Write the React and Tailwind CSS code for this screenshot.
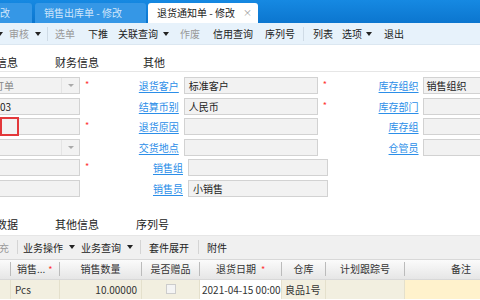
import React from "react";

const font = { fontFamily: '"Noto Sans CJK SC", "Noto Sans", sans-serif' };

const Caret = ({ className = "" }) => (
  <span className={"inline-block w-0 h-0 border-l-[3px] border-r-[3px] border-t-[4px] border-l-transparent border-r-transparent border-t-[#222] " + className}></span>
);

const Sep = ({ className = "", color = "bg-[#cfdbe6]" }) => (
  <span className={"w-px h-[14px] " + color + " " + className}></span>
);

const Star = () => <span className="text-[#f33] text-[9px] leading-none -mt-[2px]">*</span>;

const Box = ({ value = "", dropdown = false, muted = false, className = "", pad = "pl-[4px]" }) => (
  <div className={"h-[17px] bg-[#f2f2f2] border border-[#d2d2d2] flex items-center text-[10px] " + className}>
    <span className={"flex-1 whitespace-nowrap overflow-hidden " + pad + " " + (muted ? "text-[#888]" : "text-[#222]")}>{value}</span>
    {dropdown && (
      <span className="w-[18px] h-full border-l border-[#e4e4e4] flex items-center justify-center">
        <span className="inline-block w-0 h-0 border-l-[3px] border-r-[3px] border-t-[3px] border-l-transparent border-r-transparent border-t-[#aaa]"></span>
      </span>
    )}
  </div>
);

const Label = ({ children }) => (
  <span className="text-[10px] text-[#2b8ee8] underline underline-offset-2 whitespace-nowrap">{children}</span>
);

const rows = [
  { c1: "订单", pad: "pl-[34px]", d1: true, s1: true, l2: "退货客户", v2: "标准客户", s2: true, l3: "库存组织", v3: "销售组织" },
  { c1: "03", pad: "pl-[40px]", l2: "结算币别", v2: "人民币", s2: true, l3: "库存部门" },
  { red: true, s1: true, l2: "退货原因", l3: "库存组" },
  { d1: true, l2: "交货地点", l3: "仓管员" },
  { s1: true, l2: "销售组" },
  { l2: "销售员", v2: "小销售" },
];

export default function App() {
  return (
    <div className="w-[480px] h-[300px] bg-white overflow-hidden relative text-[10px]" style={font}>
      {/* tab bar */}
      <div className="h-[23px] bg-gradient-to-b from-[#1689e2] to-[#0b76cf] flex items-end whitespace-nowrap">
        <div className="w-[32px] h-[20px] bg-[#3597e6] rounded-tr-[3px] text-[#cfe6fb] leading-[20px] pl-0">改</div>
        <div className="ml-[3px] w-[111px] h-[20px] bg-[#3597e6] rounded-t-[3px] text-[#cfe6fb] leading-[20px] pl-[9px]">销售出库单 - 修改</div>
        <div className="ml-[2px] w-[110px] h-[20px] bg-white rounded-t-[3px] text-[#222] leading-[20px] pl-[9px] flex">
          <span className="flex-1">退货通知单 - 修改</span>
          <span className="text-[#999] text-[9px] pr-[6px]">×</span>
        </div>
      </div>
      {/* toolbar */}
      <div className="h-[22px] bg-[#e7f2fb] border-b border-[#dbe7f1] flex items-center text-[#222] whitespace-nowrap">
        <Caret className="-ml-[3px]" />
        <span className="ml-[6px] text-[#999]">审核</span>
        <Caret className="ml-[6px]" />
        <Sep className="ml-[6px]" />
        <span className="ml-[7px] text-[#999]">选单</span>
        <span className="ml-[13px]">下推</span>
        <span className="ml-[10px]">关联查询</span>
        <Caret className="ml-[5px]" />
        <span className="ml-[11px] text-[#999]">作废</span>
        <span className="ml-[13px]">信用查询</span>
        <span className="ml-[12px]">序列号</span>
        <Sep className="ml-[8px]" />
        <span className="ml-[9px]">列表</span>
        <span className="ml-[9px]">选项</span>
        <Caret className="ml-[4px]" />
        <span className="ml-[12px]">退出</span>
      </div>
      {/* section tabs */}
      <div className="mt-[5px] h-[22px] pt-[3px] border-b border-[#e6e6e6] flex items-center text-[11px] text-[#222] whitespace-nowrap">
        <span className="-ml-[4px]">信息</span>
        <span className="ml-[37px]">财务信息</span>
        <span className="ml-[44px]">其他</span>
      </div>
      {/* form */}
      <div className="mt-[5px] flex flex-col">
        {rows.map((r, i) => (
          <div key={i} className="h-[20.6px] flex items-start">
            <div className="w-[80px] h-[17px] relative">
              <Box value={r.c1 || ""} pad={r.pad || "pl-[4px]"} dropdown={r.d1} muted={i === 0} className="border-l-0 -ml-[40px] w-[120px]" />
              {r.red && <div className="absolute left-0 -top-[1px] w-[19px] h-[19px] border-2 border-[#e3383a]"></div>}
            </div>
            <div className="w-[60px] h-[17px] flex items-center pl-[5px]">{r.s1 && <Star />}</div>
            <div className="w-[43px] h-[17px] flex items-center justify-end"><Label>{r.l2}</Label></div>
            <div className="w-[140px] ml-[5px]">
              <Box value={r.v2 || ""} />
            </div>
            <div className="w-[62px] h-[17px] flex items-center pl-[5px]">{r.s2 && <Star />}</div>
            <div className="w-[43px] h-[17px] flex items-center justify-end">{r.l3 && <Label>{r.l3}</Label>}</div>
            {r.l3 && (
              <div className="ml-[4px] w-[60px]">
                <Box value={r.v3 || ""} pad="pl-[3px]" className="border-r-0" />
              </div>
            )}
          </div>
        ))}
      </div>
      {/* bottom tabs */}
      <div className="mt-[13px] h-[22px] border-b border-[#e6e6e6] flex items-center text-[11px] text-[#222] whitespace-nowrap">
        <span className="-ml-[4px]">数据</span>
        <span className="ml-[37px]">其他信息</span>
        <span className="ml-[37px]">序列号</span>
      </div>
      {/* sub toolbar */}
      <div className="h-[23px] bg-[#f0f0f0] flex items-center text-[#222] whitespace-nowrap">
        <span className="-ml-[1px] text-[#999]">充</span>
        <Sep className="ml-[8px]" color="bg-[#d4d4d4]" />
        <span className="ml-[5px]">业务操作</span>
        <Caret className="ml-[6px]" />
        <span className="ml-[6px]">业务查询</span>
        <Caret className="ml-[6px]" />
        <Sep className="ml-[7px]" color="bg-[#d4d4d4]" />
        <span className="ml-[8px]">套件展开</span>
        <Sep className="ml-[9px]" color="bg-[#d4d4d4]" />
        <span className="ml-[8px]">附件</span>
      </div>
      {/* table */}
      <div className="h-[21px] border-t border-[#d8d8d8] bg-gradient-to-b from-[#fbfbfb] to-[#e6e6e6] border-b border-[#d0d0d0] flex items-center text-[#333] whitespace-nowrap">
        <div className="w-[11px] h-[14px] border-r border-[#bbb]"></div>
        <div className="w-[49px] h-[14px] border-r border-[#bbb] flex items-center pl-[6px] leading-none">销售...<span className="ml-[3px] text-[#f33] text-[9px]">*</span></div>
        <div className="w-[82px] h-[14px] border-r border-[#bbb] flex items-center justify-center leading-none">销售数量</div>
        <div className="w-[58px] h-[14px] border-r border-[#bbb] flex items-center justify-center leading-none">是否赠品</div>
        <div className="w-[82px] h-[14px] border-r border-[#bbb] flex items-center justify-center leading-none">退货日期<span className="ml-[5px] text-[#f33] text-[9px]">*</span></div>
        <div className="w-[44px] h-[14px] border-r border-[#bbb] flex items-center justify-center leading-none">仓库</div>
        <div className="w-[79px] h-[14px] border-r border-[#bbb] flex items-center justify-center leading-none">计划跟踪号</div>
        <div className="flex-1 h-[14px] flex items-center justify-end pr-[9px] leading-none">备注</div>
      </div>
      <div className="h-[19px] flex text-[#333] whitespace-nowrap">
        <div className="w-[11px] bg-[#f2efe0] border-r border-[#e4e0cc]"></div>
        <div className="w-[49px] bg-[#f2efe0] border-r border-[#e4e0cc] flex items-center pl-[4px]">Pcs</div>
        <div className="w-[82px] bg-[#f2efe0] border-r border-[#e4e0cc] flex items-center justify-end pr-[4px]">10.00000</div>
        <div className="w-[58px] bg-[#f2efe0] border-r border-[#e4e0cc] flex items-center justify-center">
          <span className="w-[10px] h-[10px] border border-[#ccc] bg-[#f4f4f4]"></span>
        </div>
        <div className="w-[82px] bg-white border-r border-[#e4e0cc] flex items-center pl-[2px] overflow-hidden">2021-04-15 00:00</div>
        <div className="w-[44px] bg-[#f2efe0] border-r border-[#e4e0cc] flex items-center pl-[3px] overflow-hidden">良品1号</div>
        <div className="w-[79px] bg-[#f2efe0] border-r border-[#e4e0cc]"></div>
        <div className="flex-1 bg-[#fff2cc]"></div>
      </div>
    </div>
  );
}
